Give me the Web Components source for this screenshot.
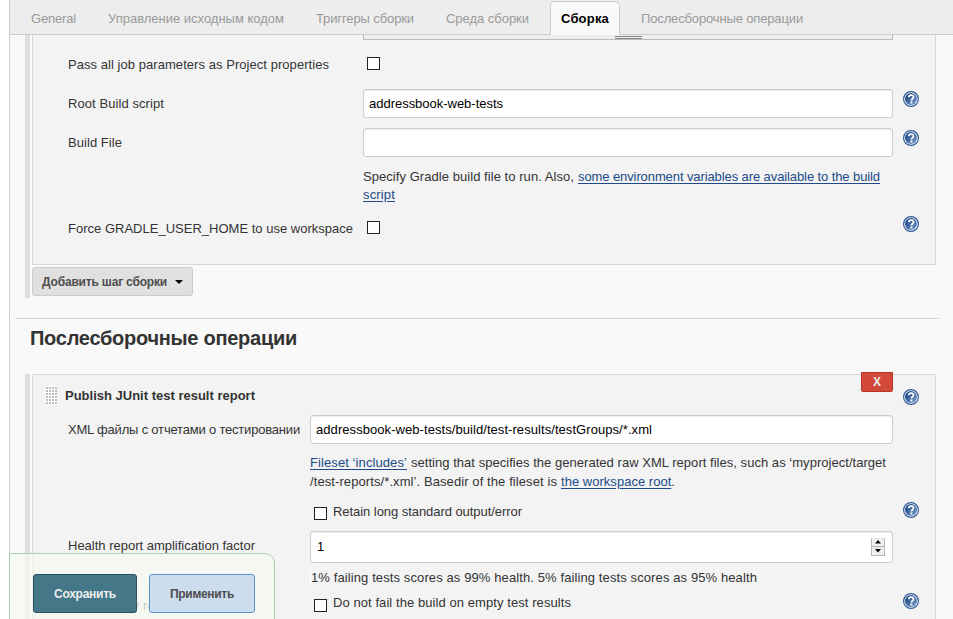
<!DOCTYPE html>
<html lang="ru"><head><meta charset="utf-8"><title>Сборка</title>
<style>
html,body{margin:0;height:619px;overflow:hidden;background:#fff}
body{font:13px "Liberation Sans",Arial,sans-serif;color:#333;position:relative}
</style></head><body>
<job-config></job-config>
<script>
const define=(name,html,setup)=>customElements.define(name,class extends HTMLElement{
  connectedCallback(){
    if(this.shadowRoot)return;
    this.attachShadow({mode:'open'}).innerHTML=typeof html==='function'?html(this):html;
    if(setup)setup(this);
  }
});

/* A line of text whose letter spacing is adjusted to a given width. */
define('text-line',`<style>:host{display:block;white-space:nowrap;line-height:18px;width:max-content}</style><slot></slot>`,
 el=>{
  const w=+el.getAttribute('w');
  if(w){const n=el.textContent.trim().length;
   el.style.letterSpacing=((w-el.getBoundingClientRect().width)/n).toFixed(4)+'px';}
 });

define('help-icon',`<style>:host{display:block;width:16px;height:16px}svg{display:block}</style>
<svg width="16" height="16" viewBox="0 0 16 16"><defs><linearGradient id="g" x1="0" y1="0" x2="1" y2="1"><stop offset=".2" stop-color="#1f4a88"/><stop offset="1" stop-color="#7fa3d1"/></linearGradient></defs>
<circle cx="8" cy="8" r="7.400" fill="#fff" stroke="#2f5a96" stroke-width="1.200"/><circle cx="8" cy="8" r="6" fill="url(#g)"/>
<path d="M5.700 6.300C5.800 4.800 6.700 4.200 8.100 4.200c1.500 0 2.400.7 2.400 1.900 0 1.600-2.100 1.700-2.100 3.400" fill="none" stroke="#fff" stroke-width="1.800"/><rect x="7.400" y="10.500" width="2" height="2" fill="#fff"/></svg>`);

define('check-box',`<style>:host{display:block;width:11px;height:11px;border:1px solid #222;background:#fff}</style>`);

define('text-field',`<style>:host{display:flex;align-items:center;box-sizing:border-box;height:29px;padding:0 5px;border:1px solid #ccc;border-radius:3px;background:#fff;box-shadow:inset 0 1px 1px #ececec;color:#000}
:host([number]){height:32px;padding:0 7px 0 6px;justify-content:space-between}</style><slot></slot>`);

define('number-spinner',`<style>:host{display:grid;grid-template-rows:9px 9px;width:14px;height:18px;margin-bottom:1px}
i{display:flex;align-items:center;justify-content:center;background:#f0f0f0;border:1px solid #b4b4b4;border-top-color:#e4e4e4;box-sizing:border-box}svg{display:block}</style>
<i><svg width="6" height="4"><path d="M3 0L6 3.500H0z"/></svg></i><i><svg width="6" height="4"><path d="M0 0H6L3 3.500z"/></svg></i>`);

define('a-link',`<style>:host{color:#204a87;text-decoration:underline;text-underline-offset:2px}</style><slot></slot>`);

define('form-row',el=>`<style>
:host{display:grid;grid-template-columns:${el.getAttribute('label-width')}px 1fr 16px;height:${el.getAttribute('height')}px;padding:0 16px 0 35px}
.label{padding-top:${el.getAttribute('label-top')||0}px}
.control{padding-top:${el.getAttribute('control-top')||0}px;margin-right:10px;min-width:0}
.help{padding-top:${el.getAttribute('help-top')||0}px}
</style><div class="label"><slot name="label"></slot></div><div class="control"><slot></slot></div><div class="help"><slot name="help"></slot></div>`);

define('check-line',`<style>:host{display:flex;gap:6px;padding-left:4px}check-box{margin-top:5px}</style><check-box></check-box><slot></slot>`);

define('step-group',`<style>:host{display:block;margin-left:15px;border-left:5px solid #ddd;padding-left:2px}</style><slot></slot>`);

define('step-box',`<style>:host{display:block;box-sizing:border-box;width:904px;border:1px solid #d8d8d8;background:#f3f3f3;position:relative}:host([open-top]){border-top:0}</style><slot></slot>`);

define('tab-item',`<style>:host{display:block;box-sizing:border-box;height:34px;padding:9px 10px 0;color:#999;border:1px solid transparent;border-bottom:0}
:host([active]){margin-top:1px;padding-top:8px;color:#000;font-weight:bold;background:#f9f9f9;border-color:#ccc;border-radius:5px 5px 0 0;z-index:1}</style><slot></slot>`);

define('tab-bar',`<style>:host{display:flex;box-sizing:border-box;height:35px;padding-left:10px;background:#ededed;border-bottom:1px solid #ccc}</style><slot></slot>`);

define('drag-handle',`<style>:host{display:block;width:12px;height:18px;background:conic-gradient(from 90deg at 1px 1px,#bdbdbd 90deg,#fff 0) 0 0/3px 3px}</style>`);

define('menu-button',`<style>:host{display:flex;align-items:center;gap:8px;box-sizing:border-box;width:161px;height:29px;margin-top:2px;padding:0 9px;border:1px solid #ccc;border-radius:3px;background:#e0e0e0;color:#4d4d4d;font-weight:bold;font-size:12px}</style><slot></slot><svg width="8" height="4"><path d="M0 0H8L4 4z"/></svg>`);

define('push-button',`<style>:host{display:flex;align-items:center;justify-content:center;box-sizing:border-box;height:39px;border:1px solid #5b93cf;border-radius:3px;background:#ccddee;color:#4d4d4d;font-weight:bold;font-size:12px;width:106px}
:host([primary]){width:104px;background:#447788;border-color:#2c5160;color:#eee}</style><slot></slot>`);

define('delete-button',`<style>:host{position:absolute;right:42px;top:-3px;width:32px;height:20px;box-sizing:border-box;display:flex;align-items:center;justify-content:center;background:#d24939;border:1px solid #b93527;border-radius:0 0 2px 2px;color:#eee;font-weight:bold;font-size:12px}</style>X`);

define('save-bar',`<style>:host{position:absolute;left:9px;top:553px;box-sizing:border-box;width:266px;height:80px;display:flex;gap:12px;align-items:flex-start;padding:20px 0 0 23px;background:rgba(246,250,241,.76);border:1px solid #a9cfb8;border-radius:0 10px 0 0}</style>
<push-button primary><text-line w="62">Сохранить</text-line></push-button><push-button><text-line w="64">Применить</text-line></push-button>`);

define('textarea-end',`<style>:host{display:flow-root;box-sizing:border-box;height:5px;margin:0 42px 0 330px;border:1px solid #bbb;border-top:0;background:#eee}
i{display:block;box-sizing:border-box;width:27px;height:3px;margin:1px auto 0;border:solid #888880;border-width:1px 0}</style><i></i>`);

define('job-config',`<style>
:host{display:block;box-sizing:border-box;margin-left:9px;height:619px;border-left:1px solid #ccc;background:#f9f9f9;overflow:hidden}
.divider{height:1px;background:#d8d8d8;margin:20px 14px 0 5px}
h2{margin:9px 0 26px 20px;font-size:20px;line-height:20px}
h2 text-line{line-height:20px}
.title{display:flex;align-items:flex-start;gap:8px;height:40px;padding:0 16px 0 12px;font-weight:bold}
.title drag-handle{margin-top:11px}.title text-line{margin-top:12px}.title help-icon{margin:14px 0 0 auto}
.sliver{border-left:1px solid #fff;margin-top:6px}
.line{display:flex;gap:4px}
.wide text-line{line-height:19px}
.check{margin-top:1px}
</style>
<tab-bar>
<tab-item><text-line w="45">General</text-line></tab-item><tab-item style="margin-left:10px"><text-line w="176">Управление исходным кодом</text-line></tab-item><tab-item style="margin-left:10px"><text-line w="98">Триггеры сборки</text-line></tab-item><tab-item style="margin-left:10px"><text-line w="83">Среда сборки</text-line></tab-item><tab-item active style="margin-left:10px"><text-line w="48">Сборка</text-line></tab-item><tab-item style="margin-left:10px"><text-line w="162">Послесборочные операции</text-line></tab-item>
</tab-bar>
<step-group style="height:263px">
<step-box open-top>
<textarea-end></textarea-end>
<form-row label-width="295" height="49" label-top="16" control-top="17"><text-line slot="label" w="261">Pass all job parameters as Project properties</text-line><check-box style="margin-left:4px"></check-box></form-row>
<form-row label-width="295" height="39" label-top="6" help-top="2"><text-line slot="label" w="96">Root Build script</text-line><text-field><text-line w="134">addressbook-web-tests</text-line></text-field><help-icon slot="help"></help-icon></form-row>
<form-row label-width="295" height="86" label-top="6" help-top="2"><text-line slot="label" w="54">Build File</text-line><text-field style="margin-bottom:11px"></text-field><div class="line"><text-line w="211">Specify Gradle build file to run. Also,</text-line><text-line w="302"><a-link>some environment variables are available to the build</a-link></text-line></div><text-line w="32"><a-link>script</a-link></text-line><help-icon slot="help"></help-icon></form-row>
<form-row label-width="295" height="50" label-top="6" control-top="7" help-top="2"><text-line slot="label" w="285">Force GRADLE_USER_HOME to use workspace</text-line><check-box style="margin-left:4px"></check-box><help-icon slot="help"></help-icon></form-row>
</step-box>
<menu-button><text-line w="125">Добавить шаг сборки</text-line></menu-button>
</step-group>
<div class="divider"></div>
<h2><text-line w="267">Послесборочные операции</text-line></h2>
<step-group>
<step-box style="height:270px">
<div class="title"><drag-handle></drag-handle><text-line w="190">Publish JUnit test result report</text-line><help-icon></help-icon></div>
<delete-button></delete-button>
<form-row label-width="242" height="87" label-top="6"><text-line slot="label" w="232">XML файлы с отчетами о тестировании</text-line><text-field style="margin-bottom:9px"><text-line w="336">addressbook-web-tests/build/test-results/testGroups/*.xml</text-line></text-field><div class="line wide"><text-line w="97"><a-link>Fileset ‘includes’</a-link></text-line><text-line w="475">setting that specifies the generated raw XML report files, such as ‘myproject/target</text-line></div><div class="line wide"><text-line w="247">/test-reports/*.xml’. Basedir of the fileset is</text-line><text-line w="114"><a-link>the workspace root</a-link>.</text-line></div></form-row>
<form-row label-width="242" height="29"><check-line><text-line class="check" w="189">Retain long standard output/error</text-line></check-line><help-icon slot="help"></help-icon></form-row>
<form-row label-width="242" height="62" label-top="6" help-top="2"><text-line slot="label" w="187">Health report amplification factor</text-line><text-field number><text-line>1</text-line><number-spinner></number-spinner></text-field><div class="sliver"><text-line w="446">1% failing tests scores as 99% health. 5% failing tests scores as 95% health</text-line></div></form-row>
<form-row label-width="242" height="29" label-top="4" control-top="1"><text-line slot="label" w="114">Allow empty results</text-line><check-line><text-line w="238">Do not fail the build on empty test results</text-line></check-line><help-icon slot="help"></help-icon></form-row>
</step-box>
</step-group>
<save-bar></save-bar>`);
</script>
</body></html>
